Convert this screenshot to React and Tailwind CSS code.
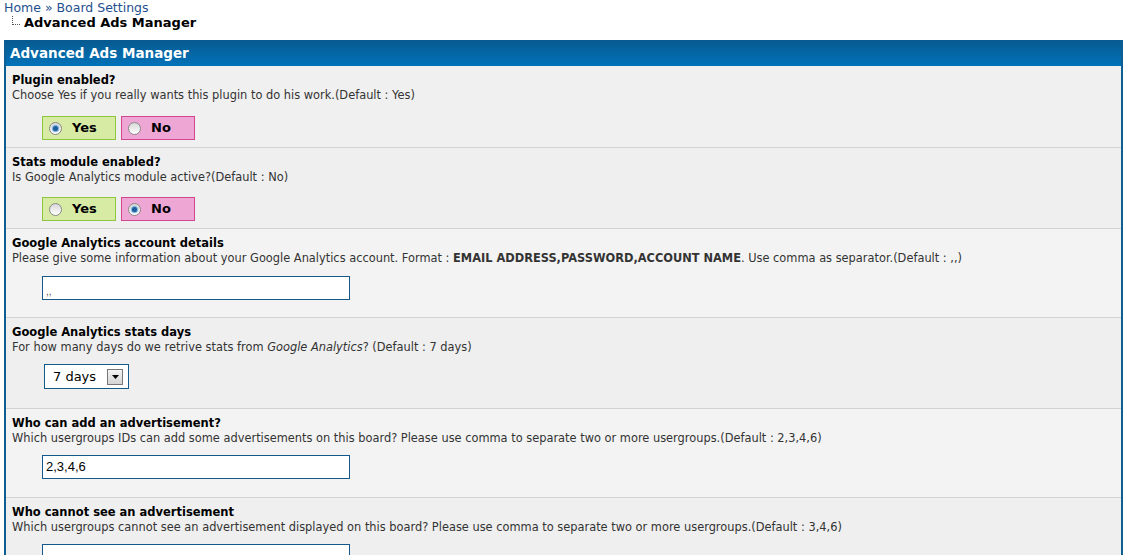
import React from 'react';

const font = { fontFamily: '"DejaVu Sans", Verdana, sans-serif' };

const RadioDot = ({ checked }) => (
  <span className="relative inline-block w-[13px] h-[13px] rounded-full border border-[#8a8a8a] bg-gradient-to-b from-[#d8d8d8] to-[#ffffff]">
    {checked && (
      <span className="absolute left-[3px] top-[3px] w-[5px] h-[5px] rounded-full bg-[#1c5f9c] shadow-[0_0_1px_1px_#6fa8d8]" />
    )}
  </span>
);

const YesNo = ({ value, top }) => (
  <div className={`flex gap-[5px] ml-[30px] ${top}`}>
    <label className="flex items-center w-[74px] h-[24px] border border-[#8cc63e] bg-[#d7eba5] pl-[6px]">
      <RadioDot checked={value === 'yes'} />
      <span className="ml-[10px] text-[13px] font-bold text-black">Yes</span>
    </label>
    <label className="flex items-center w-[74px] h-[24px] border border-[#d2468f] bg-[#eea6d5] pl-[6px]">
      <RadioDot checked={value === 'no'} />
      <span className="ml-[10px] text-[13px] font-bold text-black">No</span>
    </label>
  </div>
);

const TextBox = ({ value, small, top }) => (
  <div className={`ml-[30px] ${top} w-[308px] h-[24px] border border-[#15598c] bg-white flex items-center pl-[3px]`}>
    <span
      className={small ? 'text-[10px] text-[#555] mt-[6px]' : 'text-[13px] text-black'}
      style={{ fontFamily: '"Liberation Sans", Arial, sans-serif' }}
    >
      {value}
    </span>
  </div>
);

const Row = ({ title, desc, bg, children, bottom }) => (
  <div className={`${bg} border-b border-[#d3d3d3] pl-[6px] pt-[7px] ${bottom}`}>
    <div className="text-[11.5px] font-bold text-black leading-[15px]">{title}</div>
    <div className="text-[11.4px] text-[#333] leading-[14px]">{desc}</div>
    {children}
  </div>
);

export default function App() {
  return (
    <div className="bg-white h-[555px] overflow-hidden" style={font}>
      <div className="pl-[4px] text-[12.5px] leading-[15px] text-[#1f4f8e]">
        Home <span>»</span> Board Settings
      </div>
      <div className="flex items-end pl-[12px] h-[16px]">
        <span className="w-[8px] h-[9px] border-l border-b border-dotted border-[#555] mb-[6px]" />
        <span className="ml-[4px] text-[13px] font-bold text-black leading-[16px]">Advanced Ads Manager</span>
      </div>

      <div className="mt-[9px] ml-[4px] w-[1119px] border-l-2 border-r-2 border-[#0d5e93]">
        <div className="h-[26px] bg-gradient-to-b from-[#075a8f] to-[#0072ba] flex items-center pl-[4px] text-white text-[13.5px] font-bold">
          Advanced Ads Manager
        </div>

        <Row
          bg="bg-[#f0f0f0]"
          bottom="pb-[7px]"
          title="Plugin enabled?"
          desc="Choose Yes if you really wants this plugin to do his work.(Default : Yes)"
        >
          <YesNo value="yes" top="mt-[14px]" />
        </Row>

        <Row
          bg="bg-[#efefef]"
          bottom="pb-[7px]"
          title="Stats module enabled?"
          desc="Is Google Analytics module active?(Default : No)"
        >
          <YesNo value="no" top="mt-[13px]" />
        </Row>

        <Row
          bg="bg-[#f3f3f3]"
          bottom="pb-[17px]"
          title="Google Analytics account details"
          desc={
            <>
              Please give some information about your Google Analytics account. Format :{' '}
              <b>EMAIL ADDRESS,PASSWORD,ACCOUNT NAME</b>. Use comma as separator.(Default : ,,)
            </>
          }
        >
          <TextBox value=",," small top="mt-[11px]" />
        </Row>

        <Row
          bg="bg-[#efefef]"
          bottom="pb-[19px]"
          title="Google Analytics stats days"
          desc={
            <>
              For how many days do we retrive stats from <i>Google Analytics</i>? (Default : 7 days)
            </>
          }
        >
          <div className="ml-[32px] mt-[10px] w-[85px] h-[25px] border border-[#15598c] bg-white flex items-center justify-between pl-[8px] pr-[5px]">
            <span className="text-[13px] text-black">7 days</span>
            <span className="w-[16px] h-[16px] border border-[#777] bg-gradient-to-b from-[#f4f4f4] to-[#d4d4d4] flex items-center justify-center">
              <svg width="7" height="4" viewBox="0 0 7 4">
                <path d="M0 0h7L3.5 4z" fill="#000" />
              </svg>
            </span>
          </div>
        </Row>

        <Row
          bg="bg-[#f3f3f3]"
          bottom="pb-[18px]"
          title="Who can add an advertisement?"
          desc="Which usergroups IDs can add some advertisements on this board? Please use comma to separate two or more usergroups.(Default : 2,3,4,6)"
        >
          <TextBox value="2,3,4,6" top="mt-[10px]" />
        </Row>

        <Row
          bg="bg-[#efefef]"
          bottom="pb-[18px]"
          title="Who cannot see an advertisement"
          desc="Which usergroups cannot see an advertisement displayed on this board? Please use comma to separate two or more usergroups.(Default : 3,4,6)"
        >
          <TextBox value="" top="mt-[10px]" />
        </Row>
      </div>
    </div>
  );
}
